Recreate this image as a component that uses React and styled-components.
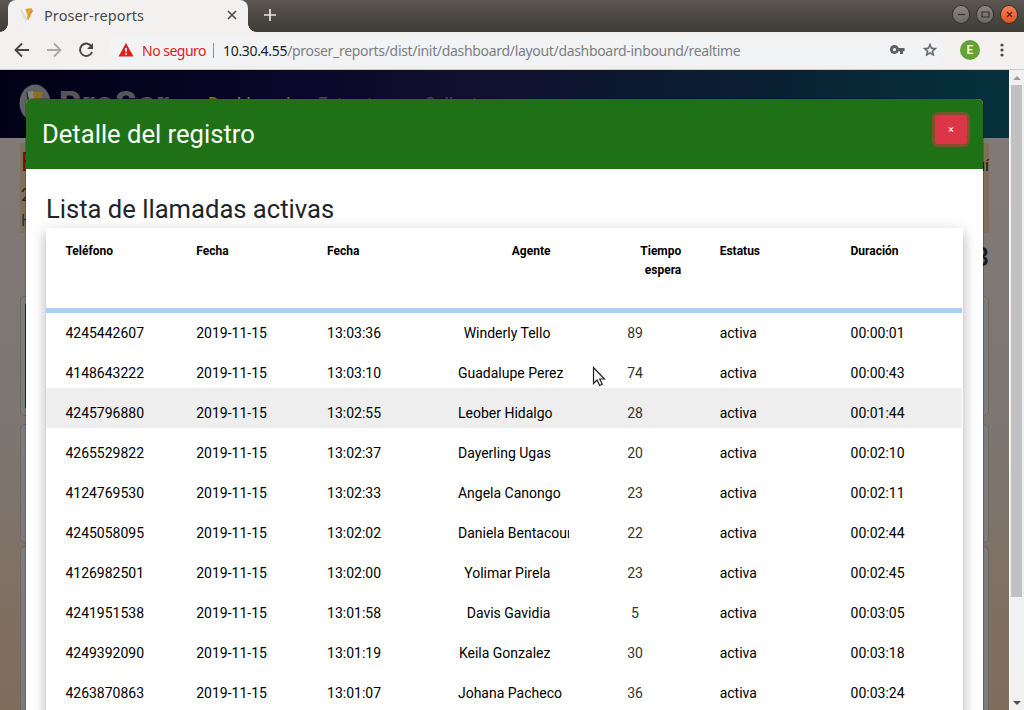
import React from 'react';
import styled, { createGlobalStyle } from 'styled-components';

const Global = createGlobalStyle`
  * { box-sizing: border-box; }
  body { margin: 0; overflow: hidden; font-family: Roboto, "Liberation Sans", sans-serif; }
`;

const Window = styled.div`
  width: 1024px; height: 710px; overflow: hidden;
  display: flex; flex-direction: column;
`;
const TitleBar = styled.div`
  height: 32px; flex: none; display: flex; align-items: flex-start;
  padding-left: 8px; padding-right: 7px;
  background: linear-gradient(#5b564e, #3d3c38);
`;
const Tab = styled.div`
  width: 240px; height: 32px; background: #f2f1f0; border-radius: 8px 8px 0 0;
  display: flex; align-items: center; padding: 0 11px 2px 12px;
  position: relative;
  &::before, &::after {
    content: ''; position: absolute; bottom: 0; width: 8px; height: 8px;
  }
  &::before { left: -8px; background: radial-gradient(circle at 0 0, transparent 7.5px, #f2f1f0 8px); }
  &::after { right: -8px; background: radial-gradient(circle at 100% 0, transparent 7.5px, #f2f1f0 8px); }
`;
const TabTitle = styled.span`
  flex: 1; margin-left: 8px; color: #4a4a48; white-space: nowrap;
  font: 14.5px "Noto Sans", "Open Sans", sans-serif; letter-spacing: 0.1px;
`;
const NewTab = styled.div`margin: 7px 0 0 14px; flex: 1; line-height: 0;`;
const Controls = styled.div`display: flex; gap: 8px; margin-top: 6px;`;
const Control = styled.div`
  width: 16px; height: 17px; border-radius: 50%;
  background: ${p => (p.$close ? 'linear-gradient(#f58057, #e7521f)' : 'linear-gradient(#8a867e, #6b6962)')};
  box-shadow: 0 0 0 1px #33322e;
  display: flex; align-items: center; justify-content: center;
`;
const Toolbar = styled.div`
  height: 38px; flex: none; display: flex; align-items: center;
  background: #f2f1f0; border-bottom: 1px solid #cfcdca; padding: 0 20px 1px 13px;
`;
const NavIcons = styled.div`display: flex; gap: 14px; width: 95px; flex: none; svg { display: block; }`;
const Address = styled.div`
  flex: 1; height: 29px; border-radius: 15px; background: #f1f3f4;
  display: flex; align-items: center; padding: 0 6px 0 10px;
  font: 14px "Noto Sans", "Open Sans", sans-serif; white-space: nowrap;
  svg { display: block; flex: none; }
`;
const Insecure = styled.span`color: #e0201b; width: 64px; margin-left: 8px; letter-spacing: -0.5px;`;
const Divider = styled.span`width: 1px; height: 15px; background: #8d9094; margin: 0 9px 0 7px;`;
const Url = styled.span`flex: 1; color: #7b7f84; letter-spacing: -0.32px; b { font-weight: 400; color: #1c1e21; }`;
const AddressIcons = styled.div`display: flex; gap: 17px; align-items: center;`;
const Avatar = styled.div`
  width: 20px; height: 20px; border-radius: 50%; background: #66a136; color: #fff;
  font: 500 12px/20px Roboto, sans-serif; text-align: center; margin: 0 20px 0 16px; flex: none;
`;

const Viewport = styled.div`flex: 1; display: flex; min-height: 0;`;
const Page = styled.div`
  width: 1009px; position: relative; overflow: hidden;
  background: linear-gradient(#817a76 0, #7d7773 50%, #806c5b 100%);
`;
const Navbar = styled.div`
  height: 68px; display: flex; align-items: flex-start; padding: 14px 19px 0;
  background: linear-gradient(90deg, #020015, #09082a 30%, #110e2d 43%, #0a1f33 75%, #05303c 97%);
`;
const Brand = styled.div`
  display: flex; align-items: center; gap: 8px; width: 189px;
  color: #57575b; font: 900 34px/38px Roboto, sans-serif; letter-spacing: 0.8px;
  svg { display: block; }
`;
const NavItem = styled.span`
  width: ${p => p.$w}px; font: 500 17px/24px Roboto, sans-serif; margin-top: 7px;
  color: ${p => (p.$active ? '#80810c' : '#46464c')};
`;
const Banner = styled.div`
  margin: 5px 20px 0; height: 90px; padding: 5px 0 0 1px; background: #817057;
  display: flex; justify-content: space-between; color: #171513;
  font: 16px/20px Roboto, sans-serif;
`;
const BannerLines = styled.div`display: flex; flex-direction: column;`;
const BannerLine = styled.span`
  font-size: ${p => p.$size}px; line-height: ${p => p.$lh}px; color: ${p => p.$c};
`;
const Counter = styled.div`
  text-align: right; padding: 9px 20px 0 0; height: 63px; color: #151a1f;
  font: 500 26px/30px Roboto, sans-serif;
`;
const Panel = styled.div`
  margin: 0 20px ${p => p.$gap || 0}px; height: ${p => p.$h}px; border: 1px solid #686868; border-radius: 5px;
  background: #7b7c7b; padding: 7px 4px;
`;
const PanelFill = styled.div`height: 104px; background: linear-gradient(90deg, #0c2474, #74807c);`;

const Modal = styled.div`
  position: absolute; left: 26px; top: 29px; width: 957px; height: 700px;
  background: #fff; border-radius: 5px 5px 0 0; overflow: hidden;
  box-shadow: 0 0 0 1px rgba(0,0,0,.2);
`;
const ModalHeader = styled.div`
  height: 70px; background: #1e7115; color: #fff; display: flex;
  justify-content: space-between; align-items: flex-start; padding: 16px 16px 0 16px;
`;
const ModalTitle = styled.h4`margin: 0; font-weight: 400; font-size: 25.6px; line-height: 39px;`;
const CloseButton = styled.button`
  width: 32px; height: 29px; border: 0; border-radius: 3px; background: #dc3545;
  box-shadow: 0 0 0 3px rgba(220,53,69,.5); color: #fff; padding: 0;
  font: 400 10.5px/29px Roboto, sans-serif;
`;
const ModalBody = styled.div`padding: 20px;`;
const SectionTitle = styled.h3`
  margin: 0; height: 39px; font-weight: 400; font-size: 25.6px; line-height: 41px; color: #212529;
`;
const Table = styled.div`
  width: 917px; height: 560px; padding-right: 1px; background: #fff;
  box-shadow: 0 5px 5px -3px rgba(0,0,0,.2), 0 8px 10px 1px rgba(0,0,0,.14), 0 3px 14px 2px rgba(0,0,0,.12);
`;
const Row = styled.div`
  display: grid; grid-template-columns: repeat(7, 1fr); height: 40px;
  border-top: 5px solid ${p => (p.$first ? '#abcff5' : p.$hover ? '#eee' : 'transparent')};
  background: ${p => (p.$hover ? '#eee' : '#fff')};
  font-size: 14px; line-height: 30px; color: #000;
`;
const HeadRow = styled.div`
  display: grid; grid-template-columns: repeat(7, 1fr); height: 80px; padding-top: 14px;
  font-size: 12px; font-weight: 700; line-height: 19px; color: #000;
`;
const Cell = styled.div`
  padding: ${p => (p.$head ? '0' : '5px')} 19px 0 19.4px; min-width: 0; overflow: hidden;
  white-space: nowrap;
  text-align: ${p => p.$align || 'left'}; color: ${p => p.$color || 'inherit'};
`;
const Pointer = styled.svg`position: absolute; left: 592px; top: 296px;`;

const Scrollbar = styled.div`
  width: 15px; background: #f1f1f1; border-left: 1px solid #fff; padding: 0 2px 0 1px;
  display: flex; flex-direction: column; align-items: center;
`;
const Thumb = styled.div`width: 11px; height: 512px; background: #c1c1c1;`;
const ScrollArrow = styled.div`height: 15px; display: flex; align-items: center;`;
const Spacer = styled.div`flex: 1;`;

const rows = [
  ['4245442607', '13:03:36', 'Winderly Tello', 89, '00:00:01'],
  ['4148643222', '13:03:10', 'Guadalupe Perez', 74, '00:00:43'],
  ['4245796880', '13:02:55', 'Leober Hidalgo', 28, '00:01:44'],
  ['4265529822', '13:02:37', 'Dayerling Ugas', 20, '00:02:10'],
  ['4124769530', '13:02:33', 'Angela Canongo', 23, '00:02:11'],
  ['4245058095', '13:02:02', 'Daniela Bentacour', 22, '00:02:44'],
  ['4126982501', '13:02:00', 'Yolimar Pirela', 23, '00:02:45'],
  ['4241951538', '13:01:58', 'Davis Gavidia', 5, '00:03:05'],
  ['4249392090', '13:01:19', 'Keila Gonzalez', 30, '00:03:18'],
  ['4263870863', '13:01:07', 'Johana Pacheco', 36, '00:03:24'],
];

const Logo = () => (
  <svg width="16" height="16" viewBox="0 0 16 16">
    <path d="M0 2l3 1.500 5 9.500-2.500 2z" fill="#dcdfe6" />
    <path d="M3 3l3-1 4 9.500-2 2z" fill="#fdfdfd" />
    <path d="M5 2l6.500-1 1 2-3 2.500 1.500 3-2.500 4.500-2-1.500 1-3z" fill="#e5a52c" />
    <path d="M9.500 5.500l3-2.500.5 1-3 4z" fill="#a88a58" />
  </svg>
);
const BrandLogo = () => (
  <svg width="32" height="38" viewBox="0 0 32 38">
    <ellipse cx="16" cy="19" rx="15.500" ry="18.500" fill="#626266" />
    <path d="M7 8l7-1 4 24-6 2z" fill="#858589" />
    <path d="M14 8h10l-2 5-5 6z" fill="#8f6f1c" />
    <path d="M7 8l1.500 0 3 14-2 1z" fill="#2e2e35" />
  </svg>
);

export default function App() {
  return (
    <Window>
      <Global />
      <TitleBar>
        <Tab>
          <Logo />
          <TabTitle>Proser-reports</TabTitle>
          <svg width="10" height="10" viewBox="0 0 10 10" stroke="#4a4a4a" strokeWidth="1.600"><path d="M1 1l8 8M9 1l-8 8" /></svg>
        </Tab>
        <NewTab>
          <svg width="16" height="16" viewBox="0 0 16 16" stroke="#e9e8e6" strokeWidth="1.700"><path d="M8 2v12M2 8h12" /></svg>
        </NewTab>
        <Controls>
          <Control><svg width="9" height="9" stroke="#33322e" strokeWidth="1.200"><path d="M1 4.500h7" /></svg></Control>
          <Control><svg width="9" height="9" fill="none" stroke="#33322e" strokeWidth="1.200"><path d="M1 2h7v5H1z" /></svg></Control>
          <Control $close><svg width="9" height="9" stroke="#5b2310" strokeWidth="1.300"><path d="M2 2l5 5M7 2l-5 5" /></svg></Control>
        </Controls>
      </TitleBar>
      <Toolbar>
        <NavIcons>
          <svg width="18" height="18" viewBox="0 0 18 18" fill="none" stroke="#444547" strokeWidth="1.800"><path d="M16 9H3M9 2.500L2.500 9 9 15.500" /></svg>
          <svg width="18" height="18" viewBox="0 0 18 18" fill="none" stroke="#a9a9a9" strokeWidth="1.800"><path d="M2 9h13M9 2.500l6.500 6.500L9 15.500" /></svg>
          <svg width="18" height="18" viewBox="0 0 18 18" fill="none" stroke="#444547" strokeWidth="2"><path d="M14.300 5.200A6.200 6.200 0 1 0 15 11" /><path d="M16 2v6h-6z" fill="#444547" stroke="none" /></svg>
        </NavIcons>
        <Address>
          <svg width="16" height="14" viewBox="0 0 16 14"><path d="M8 0l7.500 13.500H.5z" fill="#db231e" /><path d="M8 5v4M8 10v1.800" stroke="#fff" strokeWidth="1.600" /></svg>
          <Insecure>No seguro</Insecure>
          <Divider />
          <Url><b>10.30.4.55</b>/proser_reports/dist/init/dashboard/layout/dashboard-inbound/realtime</Url>
          <AddressIcons>
            <svg width="15" height="10" viewBox="0 0 15 10"><path d="M4.500 0a4.500 4.500 0 1 0 4.100 6.300H10V9h3V6.300h1.500V3H8.600A4.500 4.500 0 0 0 4.500 0zm0 3a1.600 1.600 0 1 1 0 3.200 1.600 1.600 0 0 1 0-3.200z" fill="#5c5f64" fillRule="evenodd" /></svg>
            <svg width="16" height="16" viewBox="0 0 24 24" fill="#5c5f64"><path d="M22 9.240l-7.190-.62L12 2 9.190 8.630 2 9.240l5.460 4.730L5.820 21 12 17.270 18.180 21l-1.630-7.030L22 9.240zM12 15.400l-3.760 2.270 1-4.280-3.320-2.880 4.380-.38L12 6.100l1.710 4.040 4.380.38-3.320 2.880 1 4.280L12 15.400z" stroke="#5c5f64" strokeWidth=".7" /></svg>
          </AddressIcons>
        </Address>
        <Avatar>E</Avatar>
        <svg width="4" height="14" fill="#4a4a4c"><circle cx="2" cy="2" r="1.600" /><circle cx="2" cy="7" r="1.600" /><circle cx="2" cy="12" r="1.600" /></svg>
      </Toolbar>
      <Viewport>
        <Page>
          <Navbar>
            <Brand><BrandLogo />ProSer</Brand>
            <NavItem $active $w={110}>Dashboard</NavItem>
            <NavItem $w={107}>Entrantes</NavItem>
            <NavItem $w={90}>Salientes</NavItem>
          </Navbar>
          <Banner>
            <BannerLines>
              <BannerLine $size={25} $lh={29} $c="#74120d">E</BannerLine>
              <BannerLine $size={19} $lh={35} $c="#292421">2</BannerLine>
              <BannerLine $size={16} $lh={17} $c="#13343a">H</BannerLine>
            </BannerLines>
            <BannerLine $size={16} $lh={36} $c="#171513">aquí</BannerLine>
          </Banner>
          <Counter>3</Counter>
          <Panel $h={120} $gap={8}><PanelFill /></Panel>
          <Panel $h={119} $gap={3} />
          <Panel $h={200} />
          <Modal>
            <ModalHeader>
              <ModalTitle>Detalle del registro</ModalTitle>
              <CloseButton>×</CloseButton>
            </ModalHeader>
            <ModalBody>
              <SectionTitle>Lista de llamadas activas</SectionTitle>
              <Table>
                <HeadRow>
                  <Cell $head>Teléfono</Cell>
                  <Cell $head>Fecha</Cell>
                  <Cell $head>Fecha</Cell>
                  <Cell $head $align="right">Agente</Cell>
                  <Cell $head $align="right">Tiempo<br />espera</Cell>
                  <Cell $head>Estatus</Cell>
                  <Cell $head>Duración</Cell>
                </HeadRow>
                {rows.map(([phone, time, agent, wait, duration], i) => (
                  <Row key={phone} $first={i === 0} $hover={i === 2}>
                    <Cell>{phone}</Cell>
                    <Cell>2019-11-15</Cell>
                    <Cell>{time}</Cell>
                    <Cell $align="right">{agent}</Cell>
                    <Cell $align="center" $color="#333">{wait}</Cell>
                    <Cell>activa</Cell>
                    <Cell>{duration}</Cell>
                  </Row>
                ))}
              </Table>
            </ModalBody>
          </Modal>
          <Pointer width="14" height="22" viewBox="0 0 14 22">
            <path d="M1.500 1.500v16l3.500-3.500 2.700 5.500 2.600-1.200-2.600-5.300h4.800z" fill="#f5f5f5" stroke="#222" strokeWidth="1.200" />
          </Pointer>
        </Page>
        <Scrollbar>
          <ScrollArrow><svg width="8" height="4"><path d="M0 4l4-4 4 4z" fill="#9a9a9a" /></svg></ScrollArrow>
          <Thumb />
          <Spacer />
          <ScrollArrow><svg width="8" height="4"><path d="M0 0h8l-4 4z" fill="#4d4d4d" /></svg></ScrollArrow>
        </Scrollbar>
      </Viewport>
    </Window>
  );
}
